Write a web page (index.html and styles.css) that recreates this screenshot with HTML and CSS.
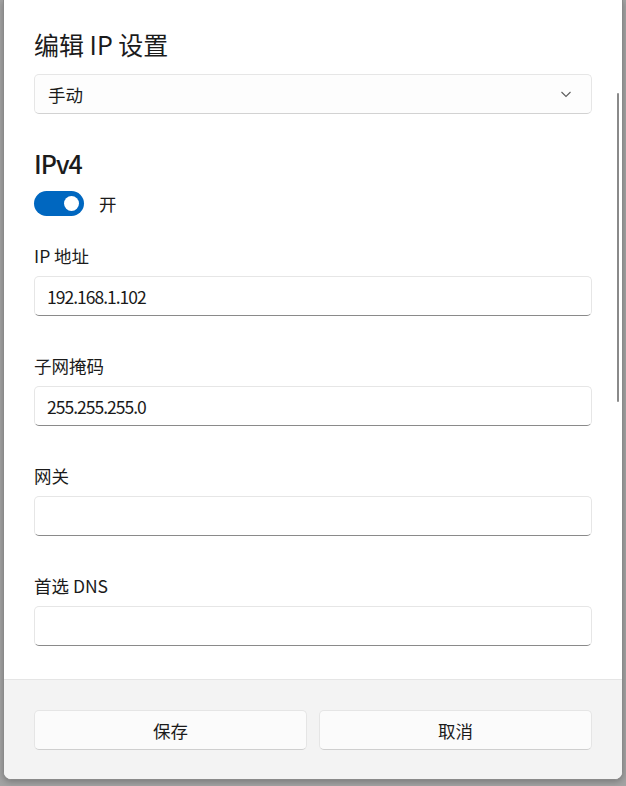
FILE: index.html
```html
<!DOCTYPE html>
<html lang="zh-CN">
<head>
<meta charset="utf-8">
<title>编辑 IP 设置</title>
<link rel="stylesheet" href="styles.css">
</head>
<body>
<div class="backdrop">
  <div class="dialog">
    <div class="content">
      <h1 class="title">编辑 IP 设置</h1>
      <div class="select">
        <span>手动</span>
        <svg class="chevron" width="12" height="7" viewBox="0 0 12 7"><path d="M1.5 1 L6 5.5 L10.5 1" fill="none" stroke="#5c5c5c" stroke-width="1.1"/></svg>
      </div>
      <h2 class="section">IPv4</h2>
      <div class="toggle-row">
        <span class="toggle"><span class="thumb"></span></span>
        <span class="toggle-label">开</span>
      </div>
      <label class="field-label first">IP 地址</label>
      <div class="input">192.168.1.102</div>
      <label class="field-label">子网掩码</label>
      <div class="input">255.255.255.0</div>
      <label class="field-label">网关</label>
      <div class="input"></div>
      <label class="field-label">首选 DNS</label>
      <div class="input"></div>
      <div class="scrollbar"></div>
    </div>
    <div class="footer">
      <button class="btn">保存</button>
      <button class="btn">取消</button>
    </div>
  </div>
</div>
</body>
</html>
```

FILE: styles.css
```css
html, body {
  margin: 0;
  padding: 0;
  height: 100%;
}
body {
  background: #a3a3a3;
  font-family: "Noto Sans CJK SC", "Noto Sans", sans-serif;
  color: #1b1b1b;
  overflow: hidden;
}
.backdrop {
  display: flex;
  padding-left: 3px;
}
.dialog {
  width: 620px;
  height: 780px;
  box-sizing: border-box;
  border: 1px solid #8a8a8a;
  border-top: none;
  border-radius: 0 0 8px 8px;
  background: #ffffff;
  display: flex;
  flex-direction: column;
  overflow: hidden;
  box-shadow: 0 2px 6px rgba(0,0,0,0.25);
}
.content {
  position: relative;
  height: 679px;
  box-sizing: border-box;
  padding: 27px 30px 0 30px;
  display: flex;
  flex-direction: column;
}
.title {
  margin: 0;
  font-size: 25px;
  font-weight: 400;
  line-height: 34px;
  height: 34px;
}
.select {
  margin-top: 13px;
  height: 40px;
  box-sizing: border-box;
  border: 1px solid #e6e6e6;
  border-bottom-color: #d2d2d2;
  border-radius: 5px;
  background: #fdfdfd;
  display: flex;
  align-items: center;
  justify-content: space-between;
  padding: 0 19px 0 13px;
  font-size: 17.5px;
}
.chevron {
  display: block;
}
.section {
  margin: 32px 0 0 0;
  font-size: 25px;
  font-weight: 500;
  letter-spacing: -1px;
  line-height: 34px;
  height: 34px;
}
.toggle-row {
  margin-top: 11px;
  display: flex;
  align-items: center;
  gap: 15px;
  height: 25px;
}
.toggle {
  width: 50px;
  height: 25px;
  border-radius: 13px;
  background: #0067c0;
  display: flex;
  align-items: center;
  justify-content: flex-end;
  padding-right: 5px;
  box-sizing: border-box;
}
.thumb {
  width: 15px;
  height: 15px;
  border-radius: 50%;
  background: #ffffff;
}
.toggle-label {
  font-size: 17.5px;
  line-height: 25px;
}
.field-label {
  display: block;
  font-size: 17.5px;
  line-height: 24px;
  height: 24px;
  margin-top: 38px;
}
.field-label.first {
  margin-top: 28px;
}
.input {
  margin-top: 8px;
  height: 40px;
  box-sizing: border-box;
  border: 1px solid #e6e6e6;
  border-bottom-color: #8a8a8a;
  border-radius: 5px;
  background: #ffffff;
  padding: 0 12px;
  display: flex;
  align-items: center;
  font-size: 17.5px;
  letter-spacing: -1px;
  color: #1a1a1a;
}
.scrollbar {
  position: absolute;
  right: 3px;
  top: 93px;
  width: 2px;
  height: 309px;
  border-radius: 1px;
  background: #8a8a8a;
}
.footer {
  flex: 1;
  background: #f3f3f3;
  border-top: 1px solid #e5e5e5;
  padding: 30px 30px 0 30px;
  display: grid;
  grid-template-columns: 1fr 1fr;
  gap: 12px;
  align-content: start;
}
.btn {
  height: 40px;
  box-sizing: border-box;
  border: 1px solid #e5e5e5;
  border-bottom-color: #cfcfcf;
  border-radius: 5px;
  background: #fbfbfb;
  font-family: "Noto Sans CJK SC", "Noto Sans", sans-serif;
  font-size: 17.5px;
  color: #1b1b1b;
  padding: 0;
}
```
